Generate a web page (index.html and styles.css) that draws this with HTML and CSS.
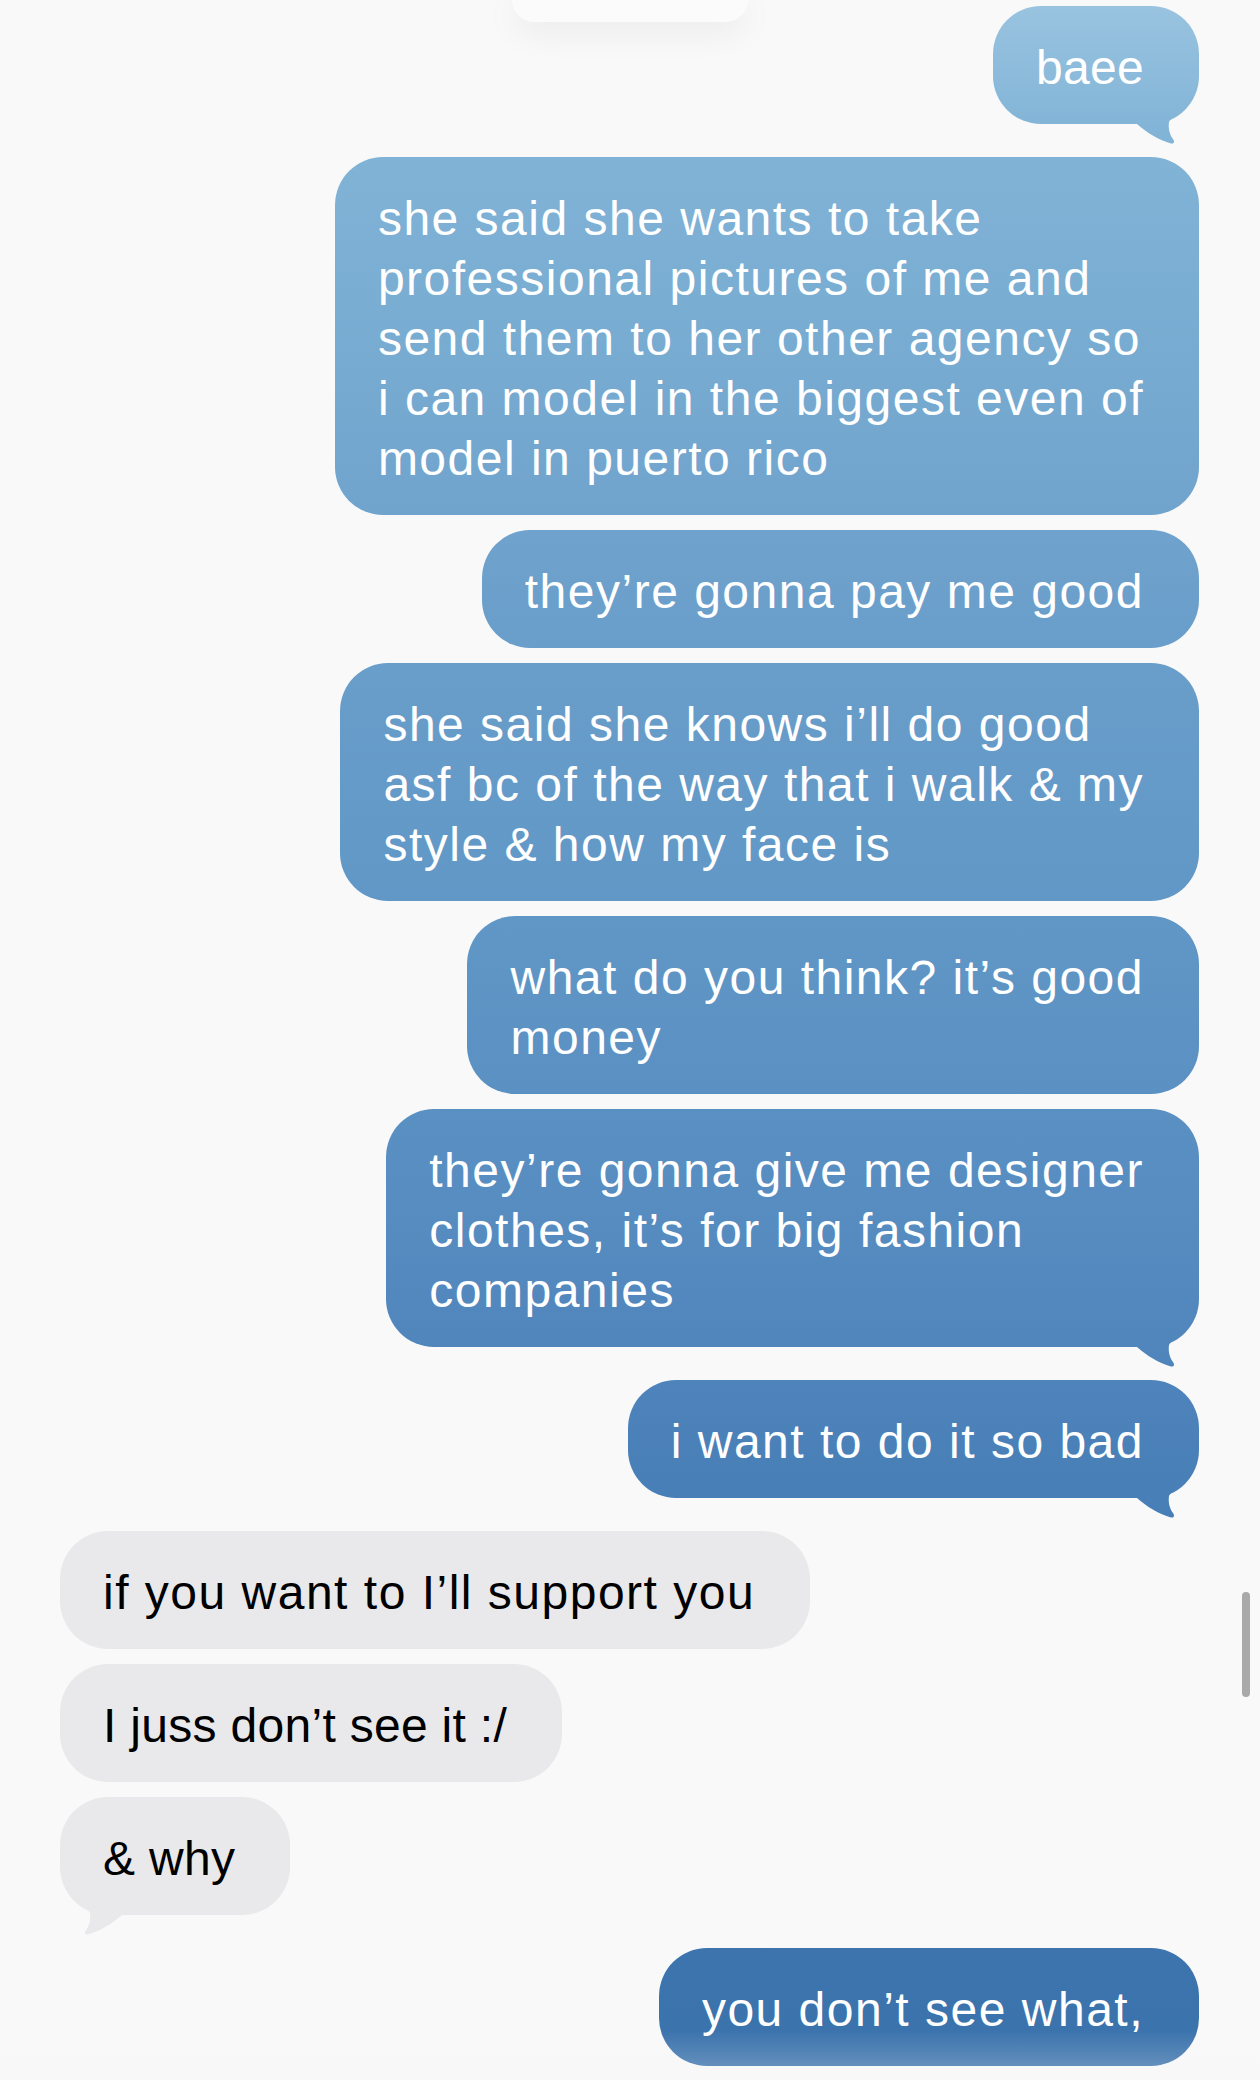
FILE: index.html
```html
<!DOCTYPE html>
<html lang="en">
<head>
    <meta charset="UTF-8">
    <title>Messages</title>
    <link rel="stylesheet" href="styles.css">
</head>
<body>
<div class="island"></div>

<div class="thread">
    <div class="msg sent tail short">baee</div>
    <div class="msg sent">she said she wants to take<br>professional pictures of me and<br>send them to her other agency so<br>i can model in the biggest even of<br>model in puerto rico</div>
    <div class="msg sent">they’re gonna pay me good</div>
    <div class="msg sent">she said she knows i’ll do good<br>asf bc of the way that i walk &amp; my<br>style &amp; how my face is</div>
    <div class="msg sent">what do you think? it’s good<br>money</div>
    <div class="msg sent tail">they’re gonna give me designer<br>clothes, it’s for big fashion<br>companies</div>
    <div class="msg sent tail">i want to do it so bad</div>

    <div class="msg received">if you want to I’ll support you</div>
    <div class="msg received short">I juss don’t see it :/</div>
    <div class="msg received tail short">&amp; why</div>

    <div class="msg sent">you don’t see what,</div>
</div>

<!-- scroll indicator + bottom blur -->
<div class="scroll-thumb"></div>
<div class="bottom-fade"></div>
</body>
</html>
```

FILE: styles.css
```css
body {
    margin: 0;
    height: 2080px;
    background: #f9f9f9;
    font-family: 'Liberation Sans', Arial, sans-serif;
    position: relative;
    overflow: hidden;
}

.thread {
    display: flex;
    flex-direction: column;
    gap: 15px;
    padding: 6px 61px 0 60px;
}

.msg {
    position: relative;
    padding: 32px 55px 26px 43px;
    border-radius: 48px;
    font-size: 48px;
    line-height: 60px;
    letter-spacing: 1.5px;
    white-space: nowrap;
}

.short {
    letter-spacing: 0.3px;
}

/* blue bubbles share one screen-wide gradient */
.sent {
    align-self: flex-end;
    color: #fff;
    background: linear-gradient(180deg, #9ac4e0 0px, #82b4d7 130px, #76aad0 380px, #6b9fcb 620px, #6097c6 920px, #568cc0 1220px, #4a80b8 1460px, #3e75ae 1900px, #3a72ac 2080px) fixed;
}

.received {
    align-self: flex-start;
    color: #000;
    background: #e9e9eb;
}

.tail {
    margin-bottom: 18px;
}

.tail::after {
    content: "";
    position: absolute;
    bottom: -20px;
    width: 70px;
    height: 60px;
}

.sent.tail::after {
    right: 0;
    background: inherit;
    clip-path: path('M0,0 L56,0 C60,10 58,20 52,27 C47,32 42,34 40,38 C39,45 41,51 44,55 C46,58 45,60 42,59.5 C30,56 18,49 8,40 L0,40 Z');
}

.received.tail::after {
    left: 0;
    background: #e9e9eb;
    clip-path: path('M70,0 L14,0 C10,10 12,20 18,27 C23,32 28,34 30,38 C31,45 29,51 26,55 C24,58 25,60 28,59.5 C40,56 52,49 62,40 L70,40 Z');
}

.island {
    position: absolute;
    top: 0;
    left: 50%;
    transform: translateX(-50%);
    width: 236px;
    height: 22px;
    background: #fbfbfb;
    border-radius: 0 0 32px 32px;
    box-shadow: 0 8px 34px rgba(0,0,0,0.08);
    z-index: 2;
}

.scroll-thumb {
    position: absolute;
    top: 1592px;
    left: 1242px;
    width: 8px;
    height: 105px;
    border-radius: 4px;
    background: #a9a9a9;
}

.bottom-fade {
    position: absolute;
    left: 0;
    right: 0;
    bottom: 0;
    height: 50px;
    background: linear-gradient(rgba(250,250,250,0), rgba(245,245,245,0.3));
}
```
